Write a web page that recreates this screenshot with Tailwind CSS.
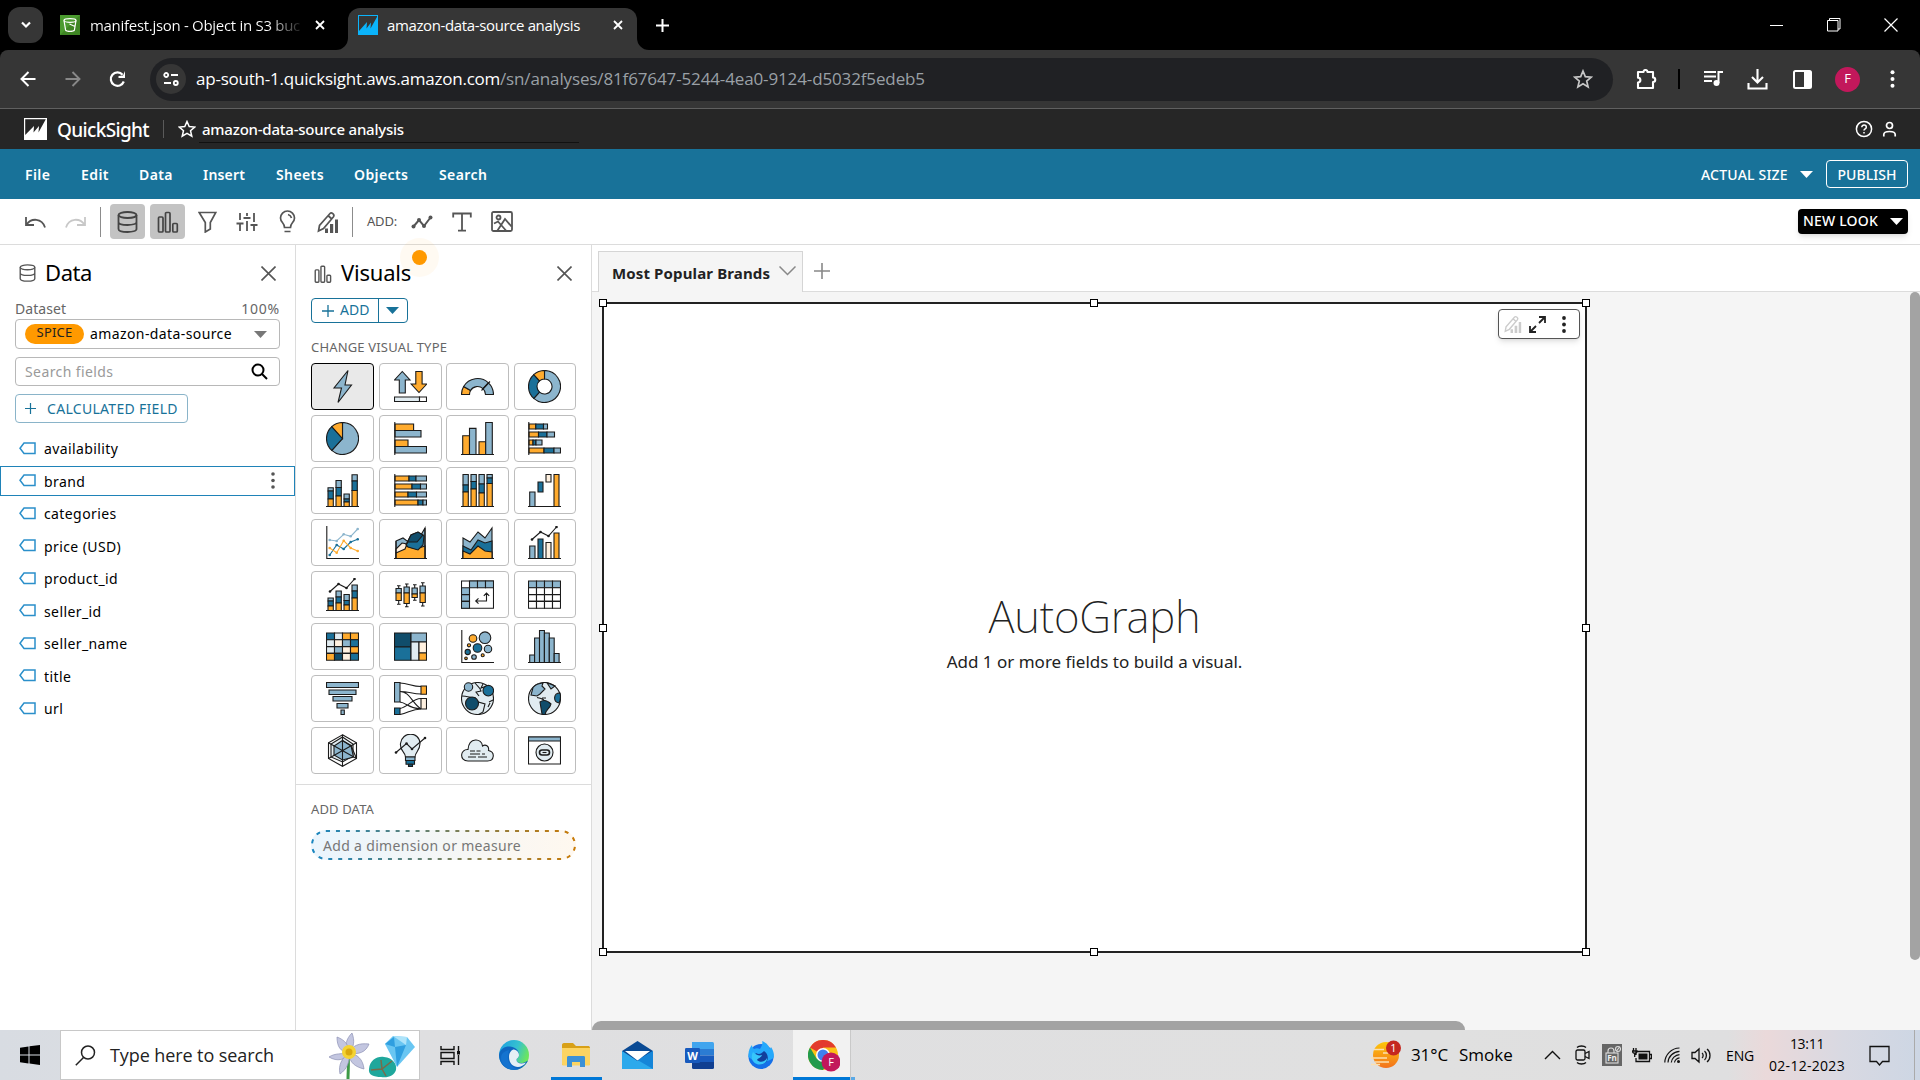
<!DOCTYPE html>
<html lang="en">
<head>
<meta charset="utf-8">
<title>amazon-data-source analysis</title>
<script src="https://cdn.jsdelivr.net/npm/@tailwindcss/browser@4"></script>
</head>
<body class="w-[1920px] h-[1080px] overflow-hidden flex flex-col bg-white text-black font-['Noto_Sans',sans-serif] whitespace-nowrap">

<!-- Browser tab strip -->
<div class="h-[50px] shrink-0 bg-black flex items-center text-white font-['Open_Sans',sans-serif] text-[15px]">
  <div class="ml-2 w-[35px] h-9 rounded-xl bg-[#363636] flex items-center justify-center">
    <svg width="12" height="8" viewBox="0 0 12 8" fill="none" stroke="#fff" stroke-width="2.2"><path d="M2 1.5l4 4 4-4"/></svg>
  </div>
  <svg class="ml-[17px]" width="20" height="20" viewBox="0 0 20 20"><rect width="20" height="20" fill="#4b9b2f"/><path d="M0 20L20 0v20z" fill="#3f8624"/><g fill="none" stroke="#fff" stroke-width="1.2"><ellipse cx="10" cy="5.5" rx="6" ry="1.8"/><path d="M4 5.5l1.6 9.6c1 1.6 7.8 1.6 8.8 0L16 5.5M9.500 9l5.500 2.500"/></g></svg>
  <div class="ml-[10px] w-[210px]"><span class="tracking-[-0.3px] bg-gradient-to-r from-white from-85% to-[#222] bg-clip-text text-transparent">manifest.json - Object in S3 buc</span></div>
  <svg class="ml-[15px]" width="10" height="10" viewBox="0 0 10 10" stroke="#fff" stroke-width="1.8"><path d="M1 1l8 8M9 1l-8 8"/></svg>
  <div class="relative ml-[23px] w-[289px] h-[42px] mt-2 rounded-t-xl bg-[#363636] flex items-center pb-2">
    <svg class="absolute left-[-12px] bottom-0" width="12" height="12" viewBox="0 0 12 12"><path d="M12 0v12H0A12 12 0 0 0 12 0z" fill="#363636"/></svg>
    <svg class="absolute right-[-12px] bottom-0" width="12" height="12" viewBox="0 0 12 12"><path d="M0 0v12h12A12 12 0 0 1 0 0z" fill="#363636"/></svg>
    <svg class="ml-[10px]" width="20" height="20" viewBox="0 0 20 20"><rect width="20" height="20" fill="#0bb4fb"/><path d="M1 1h18v1L12.500 13.500l.500-6-4.500 6L9 7 1 16z" fill="#363636"/></svg>
    <span class="ml-[9px] w-[193px] tracking-[-0.37px]">amazon-data-source analysis</span>
    <svg class="ml-[33px]" width="10" height="10" viewBox="0 0 10 10" stroke="#fff" stroke-width="1.8"><path d="M1 1l8 8M9 1l-8 8"/></svg>
  </div>
  <svg class="ml-[19px]" width="13" height="13" viewBox="0 0 13 13" stroke="#fff" stroke-width="2"><path d="M6.500 0v13M0 6.500h13"/></svg>
  <div class="ml-auto flex items-center gap-[43px] mr-[22px]">
    <svg width="14" height="14" viewBox="0 0 14 14" stroke="#fff"><path d="M0 7.500h13"/></svg>
    <svg width="14" height="14" viewBox="0 0 14 14" fill="none" stroke="#fff"><path d="M.5 2.500h10.500v10.500H.5zM2.500 2.500V.5h10.500V11H11"/></svg>
    <svg width="14" height="14" viewBox="0 0 14 14" stroke="#fff" stroke-width="1.2"><path d="M.5.500l13 13M13.500.500l-13 13"/></svg>
  </div>
</div>

<!-- Browser toolbar -->
<div class="h-[59px] shrink-0 bg-black"><div class="h-full rounded-t-lg bg-[#363636] border-b border-[#606060] flex items-center font-['Open_Sans',sans-serif] text-[17px]">
  <svg class="ml-[20px]" width="16" height="16" viewBox="0 0 16 16" fill="none" stroke="#fff" stroke-width="2"><path d="M15.500 8H2M8.500 1L1.500 8l7 7"/></svg>
  <svg class="ml-[29px]" width="16" height="16" viewBox="0 0 16 16" fill="none" stroke="#888" stroke-width="1.9"><path d="M.5 8H14M7.500 1l7 7-7 7"/></svg>
  <svg class="ml-[28px]" width="17" height="17" viewBox="0 0 17 17" fill="none" stroke="#fff" stroke-width="2.2"><path d="M14.800 10.500a6.700 6.700 0 1 1-1.200-6.800"/><path d="M16 0v7H9.500V5L14 4.500z" fill="#fff" stroke="none"/></svg>
  <div class="ml-[24px] w-[1463px] h-[43px] rounded-full bg-[#202124] flex items-center">
    <div class="ml-[6px] size-[30px] rounded-full bg-[#363636] flex items-center justify-center">
      <svg width="16" height="16" viewBox="0 0 16 16" fill="none" stroke="#fff" stroke-width="1.8"><circle cx="3.200" cy="4" r="2"/><path d="M8 4h7M1 12h7"/><circle cx="12.800" cy="12" r="2"/></svg>
    </div>
    <span class="ml-[10px] w-[304px] text-white tracking-[-0.22px]">ap-south-1.quicksight.aws.amazon.com</span><span class="w-[425px] text-[#9aa0a6] tracking-[-0.13px]">/sn/analyses/81f67647-5244-4ea0-9124-d5032f5edeb5</span>
    <svg class="ml-auto mr-[20px]" width="20" height="20" viewBox="0 0 20 20" fill="none" stroke="#c7c7c7" stroke-width="1.7"><path d="M10 2l2.300 5.600 6 .5-4.600 3.900 1.400 5.900L10 14.700l-5.100 3.200L6.300 12 1.700 8.100l6-.5z"/></svg>
  </div>
  <svg class="ml-[23px]" width="21" height="21" viewBox="0 0 21 21" fill="none" stroke="#fff" stroke-width="2.1"><path d="M2 3h5.500a2 2 0 0 1 4 0H17v5.500a2 2 0 0 1 0 4.500v6H2v-5.500a2.300 2.300 0 0 0 0-4.800z" stroke-linejoin="round"/></svg>
  <div class="ml-[21px] w-[2px] h-5 bg-black"></div>
  <svg class="ml-[23px]" width="21" height="20" viewBox="0 0 21 20" fill="none" stroke="#fff" stroke-width="2"><path d="M1 3h12M1 7.500h12M1 12h8M15.500 14V3H20"/><circle cx="13.500" cy="14" r="3" fill="#fff" stroke="none"/></svg>
  <svg class="ml-[23px]" width="21" height="21" viewBox="0 0 21 21" fill="none" stroke="#fff" stroke-width="2.1"><path d="M10.500 0v13M5 8l5.500 5.500L16 8M1.500 14v5.500h18V14"/></svg>
  <svg class="ml-[25px]" width="19" height="19" viewBox="0 0 19 19"><rect x="1" y="1" width="17" height="17" rx="1.5" fill="none" stroke="#fff" stroke-width="2"/><path d="M11 1h7v17h-7z" fill="#fff"/></svg>
  <div class="ml-[23px] size-[25px] rounded-full bg-[#c2185b] text-white text-[13px] flex items-center justify-center">F</div>
  <svg class="ml-[30px]" width="5" height="18" viewBox="0 0 5 18" fill="#fff"><circle cx="2.500" cy="2.200" r="2"/><circle cx="2.500" cy="9" r="2"/><circle cx="2.500" cy="15.800" r="2"/></svg>
</div></div>

<!-- QuickSight header -->
<div class="h-10 shrink-0 bg-[#262626] flex items-center text-white">
  <svg class="ml-6" width="23" height="22" viewBox="0 0 23 22"><rect width="23" height="22" fill="#fff"/><path d="M1.200 1.200h20.600L14.500 14.500l.5-6.500-5.500 6.500L10 8 1.200 17z" fill="#262626"/></svg>
  <span class="ml-[10px] w-[92px] text-[19px] font-medium tracking-[-0.65px] pt-0.5">QuickSight</span>
  <div class="ml-[14px] w-px h-[18px] bg-[#5a5a5a]"></div>
  <svg class="ml-[14px]" width="18" height="18" viewBox="0 0 18 18" fill="none" stroke="#fff" stroke-width="1.5"><path d="M9 1.500l2.200 5.100 5.500.5-4.200 3.600 1.300 5.500L9 13.300l-4.800 2.900 1.300-5.500L1.300 7.100l5.500-.5z"/></svg>
  <div class="ml-[3px] w-[380px] h-[28px] border-b border-[#111] pl-[3px] flex items-center pt-0.5"><span class="text-[15px] font-medium tracking-[-0.22px]">amazon-data-source analysis</span></div>
  <svg class="ml-auto" width="18" height="18" viewBox="0 0 18 18" fill="none" stroke="#fff" stroke-width="1.5"><circle cx="9" cy="9" r="7.600"/><path d="M6.800 7.300c0-3 4.500-2.800 4.500-.1C11.300 8.800 9 8.800 9 10.500M9 12v1.500"/></svg>
  <svg class="ml-[9px] mr-[23px]" width="15" height="16" viewBox="0 0 15 16" fill="none" stroke="#fff" stroke-width="1.7"><circle cx="7.500" cy="4.500" r="3"/><path d="M1.800 15.500v-2c0-4 11.400-4 11.400 0v2"/></svg>
</div>

<!-- Menu bar -->
<div class="h-[50px] shrink-0 bg-[#187299] flex items-center text-white text-[14px] font-semibold tracking-[0.4px] pl-[25px]">
  <span class="w-[56px]">File</span><span class="w-[58px]">Edit</span><span class="w-[64px]">Data</span><span class="w-[73px] tracking-[0.2px]">Insert</span><span class="w-[78px]">Sheets</span><span class="w-[85px]">Objects</span><span class="w-[48px]">Search</span>
  <span class="ml-auto w-[87px] font-medium tracking-[0.2px]">ACTUAL SIZE</span>
  <svg class="ml-3" width="13" height="7" viewBox="0 0 13 7" fill="#fff"><path d="M0 0h13L6.500 7z"/></svg>
  <div class="ml-[13px] mr-3 w-[82px] h-7 rounded border border-white flex items-center justify-center font-medium tracking-[0.05px]">PUBLISH</div>
</div>

<!-- Tool bar -->
<div class="h-[46px] shrink-0 bg-white border-b border-[#dcdcdc] flex items-center">
  <svg class="ml-6" width="23" height="14" viewBox="0 0 23 14" fill="none" stroke="#555" stroke-width="1.8"><path d="M2 2v8h8M2.500 9.500C7 3 18 2.500 21 12.500"/></svg>
  <svg class="ml-[17px]" width="23" height="14" viewBox="0 0 23 14" fill="none" stroke="#c8c8c8" stroke-width="1.8"><path d="M21 2v8h-8M20.500 9.500C16 3 5 2.500 2 12.500"/></svg>
  <div class="ml-[13px] w-px h-[30px] bg-[#8c8c8c]"></div>
  <div class="ml-[9px] w-[35px] h-[35px] rounded bg-[#c3c3c3] flex items-center justify-center">
    <svg width="21" height="22" viewBox="0 0 21 22" fill="none" stroke="#444" stroke-width="1.8"><ellipse cx="10.500" cy="4" rx="9" ry="3"/><path d="M1.500 4v14c0 4 18 4 18 0V4M1.500 11c0 4 18 4 18 0"/></svg>
  </div>
  <div class="ml-[5px] w-[35px] h-[35px] rounded bg-[#c3c3c3] flex items-center justify-center">
    <svg width="22" height="22" viewBox="0 0 22 22" fill="none" stroke="#444" stroke-width="1.7"><rect x="1.500" y="6" width="4.500" height="15" rx="1"/><rect x="8.500" y="1.500" width="4.500" height="19.500" rx="1"/><rect x="15.800" y="12.500" width="4.500" height="8.500" rx="1"/></svg>
  </div>
  <svg class="ml-[13px]" width="19" height="22" viewBox="0 0 19 22" fill="none" stroke="#555" stroke-width="1.7"><path d="M1.200 1.500h16.600l-5.500 10v6.500l-5 3V11.500z"/></svg>
  <svg class="ml-[19px]" width="22" height="20" viewBox="0 0 22 20" fill="none" stroke="#555" stroke-width="1.8"><path d="M4 1v7M4 12v7M11 1v3M11 9v10M18 1v9M18 14v5M.5 11.500h7M7.500 6h7M14.500 13h7"/></svg>
  <svg class="ml-[21px]" width="17" height="23" viewBox="0 0 17 23" fill="none" stroke="#555" stroke-width="1.7"><path d="M5.500 17.500c0-5-4-5-4-9.500a7 7 0 0 1 14 0c0 4.500-4 4.500-4 9.500zM5.500 21.500h6M9 4.500c2 .5 3 1.500 3.500 3.500"/></svg>
  <svg class="ml-[21px]" width="22" height="22" viewBox="0 0 22 22" fill="none" stroke="#555" stroke-width="1.7"><path d="M1.500 20l1-5.500L13 2.500c1.500-1.500 5 1 3.500 3.200L6.500 17.500zM11 4.500l3.800 3.500"/><path d="M8 17.500h3V22H8zM13 13h3.200v9H13zM18 8.500h3V22h-3z" fill="#555" stroke="none"/></svg>
  <div class="ml-[13px] w-px h-[30px] bg-[#8c8c8c]"></div>
  <span class="ml-[14px] w-[31px] text-[13px] text-[#555] tracking-[-0.2px]">ADD:</span>
  <svg class="ml-[13px]" width="22" height="14" viewBox="0 0 22 14" fill="none" stroke="#555" stroke-width="2"><path d="M2.500 11.500L8 5l5 6 6.500-8.500"/><g fill="#555" stroke="none"><circle cx="2.500" cy="11.500" r="2"/><circle cx="8" cy="5" r="2"/><circle cx="13" cy="11" r="2"/><circle cx="19.500" cy="2.500" r="2"/></g></svg>
  <svg class="ml-[19px]" width="20" height="20" viewBox="0 0 20 20" fill="none" stroke="#555" stroke-width="1.8"><path d="M1.200 5.500V1.500h17.600v4M10 1.500v17M6 18.600h8"/></svg>
  <svg class="ml-[19px]" width="22" height="21" viewBox="0 0 22 21" fill="none" stroke="#555" stroke-width="1.8"><rect x="1" y="1" width="20" height="19" rx="1.5"/><circle cx="7.500" cy="6.500" r="2"/><path d="M3 12.500l4-2 8 9M6.500 19.500L14 8l6.500 7.500"/></svg>
  <div class="ml-auto mr-3 w-[110px] h-[25px] rounded bg-black shadow-md flex items-center text-white text-[14px] font-medium pl-[5px]"><span class="w-[76px] -mt-0.5 tracking-[0.19px]">NEW LOOK</span><svg class="ml-[11px]" width="13" height="7" viewBox="0 0 13 7" fill="#fff"><path d="M0 0h13L6.500 7z"/></svg></div>
</div>

<div class="h-[785px] shrink-0 flex">
  <!-- Data panel -->
  <div class="w-[296px] shrink-0 border-r border-[#dcdcdc] flex flex-col text-[14px] tracking-[0.4px]">
    <div class="h-[54px] pl-[19px] pr-[19px] flex items-center">
      <svg class="mt-0.5" width="17" height="18" viewBox="0 0 21 22" fill="none" stroke="#555" stroke-width="1.7"><ellipse cx="10.500" cy="4" rx="9" ry="3"/><path d="M1.500 4v14c0 4 18 4 18 0V4M1.500 11c0 4 18 4 18 0"/></svg>
      <span class="ml-[9px] text-[22px] tracking-[-0.42px]">Data</span>
      <svg class="mt-0.5 ml-auto" width="15" height="15" viewBox="0 0 15 15" stroke="#555" stroke-width="1.6"><path d="M.5.500l14 14M14.500.500l-14 14"/></svg>
    </div>
    <div class="h-[20px] pb-0.5 pl-[15px] pr-[15px] flex items-center justify-between text-[#666]"><span class="tracking-[0.05px]">Dataset</span><span class="tracking-[0.8px]">100%</span></div>
    <div class="ml-[15px] w-[265px] h-[30px] rounded border border-[#b8b8b8] flex items-center pl-[9px]">
      <div class="w-[59px] h-5 rounded-full bg-[#ff9900] text-[13px] leading-[17px] text-[#222] text-center tracking-[0.2px]">SPICE</div>
      <span class="ml-[6px] w-[142px] -mt-0.5">amazon-data-source</span>
      <svg class="ml-[22px]" width="13" height="7" viewBox="0 0 13 7" fill="#777"><path d="M0 0h13L6.500 7z"/></svg>
    </div>
    <div class="mt-2 ml-[15px] w-[265px] h-[29px] rounded border border-[#b8b8b8] flex items-center pl-[9px] pr-[11px] text-[#9a9a9a]"><span>Search fields</span><svg class="ml-auto" width="17" height="17" viewBox="0 0 17 17" fill="none" stroke="#000" stroke-width="2"><circle cx="7" cy="7" r="5.500"/><path d="M11 11l5 5"/></svg></div>
    <div class="mt-2 ml-[15px] w-[173px] h-[29px] rounded border border-[#8ab4c9] flex items-center pl-[9px] text-[#187299] text-[14px]"><svg width="11" height="11" viewBox="0 0 11 11" stroke="#187299" stroke-width="1.2"><path d="M5.500 0v11M0 5.500h11"/></svg><span class="ml-[11px] tracking-[0.3px]">CALCULATED FIELD</span></div>
    <div id="fields" class="mt-[9px] flex flex-col"></div>
  </div>

  <!-- Visuals panel -->
  <div class="w-[296px] shrink-0 border-r border-[#dcdcdc] flex flex-col text-[13px]">
    <div class="h-[53px] shrink-0 pl-[18px] pr-[19px] pt-0.5 flex items-center">
      <svg class="mt-0.5" width="18" height="18" viewBox="0 0 22 22" fill="none" stroke="#555" stroke-width="1.7"><rect x="1.500" y="6" width="4.500" height="15" rx="1"/><rect x="8.500" y="1.500" width="4.500" height="19.500" rx="1"/><rect x="15.800" y="12.500" width="4.500" height="8.500" rx="1"/></svg>
      <div class="relative ml-[9px]"><div class="absolute left-[59px] top-[-18px] size-[39px] rounded-full bg-[#ff9900]/5 flex items-center justify-center"><div class="size-[15px] rounded-full bg-[#ff9900]"></div></div><span class="relative text-[22px] tracking-[-0.22px]">Visuals</span></div>
      <svg class="ml-auto mt-0.5" width="15" height="15" viewBox="0 0 15 15" stroke="#555" stroke-width="1.6"><path d="M.5.500l14 14M14.500.500l-14 14"/></svg>
    </div>
    <div class="ml-[15px] w-[97px] h-[25px] shrink-0 rounded border border-[#187299] flex items-center text-[#187299] text-[14px]">
      <svg class="ml-[10px]" width="12" height="12" viewBox="0 0 12 12" stroke="#187299" stroke-width="1.3"><path d="M6 0v12M0 6h12"/></svg>
      <span class="ml-[6px] w-[38px] pb-0.5">ADD</span>
      <div class="w-px h-full bg-[#187299]"></div><svg class="ml-[7px]" width="13" height="7" viewBox="0 0 13 7" fill="#187299"><path d="M0 0h13L6.500 7z"/></svg>
    </div>
    <div class="mt-[15px] ml-[15px] h-[18px] leading-[18px] text-[#666] tracking-[0.17px]">CHANGE VISUAL TYPE</div>
    <div id="visuals" class="mt-[7px] ml-[15px] w-[265px] grid grid-cols-[63px_63px_63px_62px] gap-x-[4.6px] gap-y-[5px]"></div>
    <div class="mt-[10px] border-t border-[#dcdcdc]"></div>
    <div class="mt-[15px] ml-[15px] h-[18px] leading-[18px] text-[#666] tracking-[0.14px]">ADD DATA</div>
    <div class="relative mt-[12px] ml-[15px] w-[265px] h-[30px] rounded-full bg-gradient-to-r from-[#eaf5fd] to-[#fff8ef] flex items-center pl-3 text-[14px] text-[#777]">
      <svg class="absolute inset-0" width="265" height="30" fill="none"><defs><linearGradient id="edge"><stop stop-color="#1a86c0"/><stop offset="1" stop-color="#c97a06"/></linearGradient></defs><rect x="1" y="1" width="263" height="28" rx="14" stroke="url(#edge)" stroke-width="2" stroke-dasharray="4 5.95"/></svg>
      <span class="tracking-[0.32px]">Add a dimension or measure</span>
    </div>
  </div>

  <!-- Sheet area -->
  <div class="relative flex-1 bg-[#f5f5f5] flex flex-col">
    <div class="h-[47px] shrink-0 bg-white border-b border-[#dcdcdc] flex">
      <div class="ml-[6px] mt-[6px] w-[205px] h-[41px] bg-[#f5f5f5] border border-b-0 border-[#d5d5d5] flex items-center pl-[13px] pt-0.5 text-[15px] font-bold text-[#222]"><span class="w-[158px] tracking-[0.13px]">Most Popular Brands</span><svg class="ml-[9px] -mt-1" width="17" height="10" viewBox="0 0 17 10" fill="none" stroke="#888" stroke-width="1.5"><path d="M.5.500l8 8 8-8"/></svg></div>
      <svg class="ml-[11px] mt-[18px]" width="16" height="16" viewBox="0 0 16 16" stroke="#888" stroke-width="1.6"><path d="M8 0v16M0 8h16"/></svg>
    </div>
    <div class="relative mt-[10px] ml-[10px] w-[985px] h-[651px] bg-white border-2 border-[#222] flex flex-col items-center text-[#222]">
      <i class="absolute left-[-5px] top-[-5px] size-2 bg-white border border-black"></i><i class="absolute left-[486px] top-[-5px] size-2 bg-white border border-black"></i><i class="absolute right-[-5px] top-[-5px] size-2 bg-white border border-black"></i>
      <i class="absolute left-[-5px] top-[320px] size-2 bg-white border border-black"></i><i class="absolute right-[-5px] top-[320px] size-2 bg-white border border-black"></i>
      <i class="absolute left-[-5px] bottom-[-5px] size-2 bg-white border border-black"></i><i class="absolute left-[486px] bottom-[-5px] size-2 bg-white border border-black"></i><i class="absolute right-[-5px] bottom-[-5px] size-2 bg-white border border-black"></i>
      <div class="absolute right-[5px] top-[5px] w-[82px] h-[30px] rounded border border-[#555] bg-white shadow-md flex items-center pl-[5px]">
        <svg width="18" height="18" viewBox="0 0 22 22" fill="none" stroke="#ccc" stroke-width="1.7"><path d="M1.500 20l1-5.500L13 2.500c1.500-1.500 5 1 3.500 3.200L6.500 17.500zM11 4.500l3.800 3.500"/><path d="M8 17.500h3V22H8zM13 13h3.200v9H13zM18 8.500h3V22h-3z" fill="#ccc" stroke="none"/></svg>
        <svg class="ml-[7px]" width="17" height="17" viewBox="0 0 17 17" fill="none" stroke="#222" stroke-width="1.8"><path d="M10 1h6v6M16 1l-6 6M1 10v6h6M1 16l6-6"/></svg>
        <svg class="ml-[16px]" width="4" height="17" viewBox="0 0 4 17" fill="#222"><circle cx="2" cy="2" r="1.900"/><circle cx="2" cy="8.500" r="1.900"/><circle cx="2" cy="15" r="1.900"/></svg>
      </div>
      <div class="mt-[281px] h-[62px] leading-[62px] text-[44px] font-extralight tracking-[-0.2px]">AutoGraph</div>
      <div class="mt-[3px] h-6 leading-6 text-[17px]">Add 1 or more fields to build a visual.</div>
    </div>
    <div class="absolute right-0 top-[47px] w-[10px] h-[668px] rounded-full bg-[#a3a3a3]"></div>
    <div class="absolute left-0 bottom-0 w-[873px] h-[9px] rounded-t-full bg-[#a3a3a3]"></div>
  </div>
</div>

<!-- Windows taskbar -->
<div class="h-[50px] shrink-0 flex items-center bg-[linear-gradient(90deg,#d8dce2_0,#dfdfe1_20%,#e0e0e0_75%,#dfdfe0_90%,#ead9da_92%,#d8d9e2_96%,#cdd6e4_100%)] font-['Open_Sans',sans-serif]">
  <svg class="ml-5" width="20" height="20" viewBox="0 0 20 20"><path d="M0 2.800l8.500-1.300v8H0zM9.500 1.300L20 0v9.500H9.500zM0 10.500h8.500v8L0 17.300zM9.500 10.500H20V20L9.500 18.600z"/></svg>
  <div class="ml-5 w-[360px] h-[50px] bg-white border border-[#c8c8c8] flex items-center text-[#222]">
    <svg class="ml-[14px]" width="21" height="21" viewBox="0 0 21 21" fill="none" stroke="#222" stroke-width="1.5"><circle cx="13" cy="7.500" r="6.500"/><path d="M8.500 12.500L.8 20.300"/></svg>
    <span class="ml-[14px] w-[164px] text-[18px] tracking-[-0.09px]">Type here to search</span>
    <svg class="ml-[54px]" width="88" height="48" viewBox="0 0 88 48">
      <path d="M20 25c1 8 0 15 0 23" stroke="#3d9a46" stroke-width="3" fill="none"/>
      <g fill="#c3c6e0" stroke="#8d90b5" stroke-width=".7"><path d="M21 22c-5-7-3-14 3-20 3 8 2 14-3 20z"/><path d="M21 22C12 21 9 15 9 6c8 3 12 8 12 16z"/><path d="M21 22c4-8 10-10 20-9-3 8-10 11-20 9z"/><path d="M21 22c-7 1-14 0-20 4 8 5 17 3 20-4z"/><path d="M21 22c-7 5-11 12-9 21 7-5 10-12 9-21z"/><path d="M21 22c8 1 14 6 15 16-8-2-15-6-15-16z"/></g><circle cx="21" cy="21" r="7" fill="#f4d333"/><circle cx="21" cy="21" r="3.500" fill="#d9a80f"/>
      <path d="M57 13l8-8 14 1 8 10-18 20z" fill="#69c6f2"/><path d="M57 13l10 3-1-10zM67 16l2 20 9-22z" fill="#2f9fe0"/><path d="M65 5l13 9 1-8z" fill="#aee4fa"/>
      <path d="M41 38c1-9 8-13 15-12 9 1 13 7 12 13-2 6-8 8-15 7-7 0-13-2-12-8z" fill="#1fa79c"/><path d="M43 39l11-1 10-8M54 38l4 7M54 38l-1-9" stroke="#7a6a4a" stroke-width="1.5" fill="none"/>
    </svg>
  </div>
  <svg class="ml-5" width="21" height="20" viewBox="0 0 21 20" fill="none" stroke="#111" stroke-width="1.4"><path d="M1 1v3.500h13V1M1 7.500h13v6H1zM1 20v-3.500h13V20M18.500 1v5M18.500 10v10"/><path d="M17 6h3v3.500h-3z" fill="#111" stroke="none"/></svg>
  <svg class="ml-[38px]" width="30" height="30" viewBox="0 0 30 30"><defs><linearGradient id="eg" x1="0" y1="0" x2="1" y2=".4"><stop stop-color="#1b9de2"/><stop offset=".6" stop-color="#35c1d0"/><stop offset="1" stop-color="#6be55f"/></linearGradient></defs><circle cx="15" cy="15" r="15" fill="url(#eg)"/><path d="M0 15C1 8 7 6 11 6.500c7 1 9 5 9 8.500 0 3-2.500 3-2.500 5 0 4 7 4 11.500.5C26 27 20 30 15 30 6 30 0 23 0 15z" fill="#0f66c0"/><path d="M10 17c0-5 3-7.500 5-7.500 3 .5 5 3 5 5.500 0 3-2.500 3-2.500 5 0 3.500 5 4.500 9.500 2.500C22 30 10 28 10 17z" fill="#e4eff5"/><path d="M9 16c-1 7 5 13 11 13-9 3-18-3-18-11 0-5 4-7 8-8z" fill="#1573cf"/></svg>
  <div class="ml-[22px] w-[51px] h-full border-b-[3px] border-[#0078d7] flex items-center justify-center"><svg class="mt-[3px] -ml-0.5" width="28" height="24" viewBox="0 0 28 24"><path d="M0 2c0-1 .5-2 2-2h9l3 3h12c1 0 2 .5 2 2v17H0z" fill="#d8a017"/><path d="M0 5h28v16c0 1-.5 1.500-1.500 1.500h-25C.5 22.500 0 22 0 21z" fill="#fcd462"/><path d="M5 24V14.500c0-1 .7-1.500 1.500-1.500h15c1 0 1.500.5 1.500 1.500V24h-5v-5h-8v5z" fill="#3c91d6"/></svg></div>
  <svg class="ml-[20px]" width="31" height="28" viewBox="0 0 31 28"><path d="M0 10L15.500 0 31 10v17H0z" fill="#0a4a94"/><path d="M0 10l15.500 10L31 10v18H0z" fill="#2ca9ec"/><path d="M31 10v18L15.500 19z" fill="#1585d8"/><path d="M3 10h25L15.500 19.500z" fill="#fff"/></svg>
  <svg class="ml-[32px]" width="29" height="27" viewBox="0 0 29 27"><path d="M7 0h20.500q1.500 0 1.500 1.500V7H7z" fill="#41a5ee"/><path d="M7 7h22v6.500H7z" fill="#2b7cd3"/><path d="M7 13.500h22V20H7z" fill="#185abd"/><path d="M7 20h22v5.500q0 1.500-1.500 1.500H8.500Q7 27 7 25.500z" fill="#103f91"/><rect y="6" width="15" height="15" rx="1.3" fill="#185abd"/><text x="7.500" y="17.500" fill="#fff" font-size="11" font-weight="700" text-anchor="middle">W</text></svg>
  <svg class="ml-[33px]" width="28" height="28" viewBox="0 0 28 28"><circle cx="14" cy="15.500" r="12.500" fill="#1570e8"/><path d="M1.500 16C1 10 3 6 5 4c0 2 1 3 2 4 2-1 4-1 6 0 2-3 3-6 2-8 5 2 7 5 8 8l1-2c2 3 3.500 6 2.500 11-9 6-17 6-25-1z" fill="#25a9fb"/><path d="M9 12c3 2 5 1 8-2 3 2 5 6 3 10-4 5-11 4-13-1 0-3 0-5 2-7z" fill="#123f9c"/><path d="M6 11c3 3 6 4 9 3-1 3-4 3-5 5 3 3 8 2 10-2 1 7-12 10-15 1-.5-3 0-5 1-7z" fill="#37c6fb"/></svg>
  <div class="ml-[18px] w-[57px] h-full bg-[#f2f2f2] border-b-[3px] border-[#0078d7] flex items-center justify-center"><svg class="mt-1 ml-1" width="32" height="32" viewBox="0 0 32 32"><circle cx="15" cy="15" r="15" fill="#fbc116"/><path d="M15 15L2 7.500A15 15 0 0 1 28 7.500H15z" fill="#e33b2e"/><path d="M2 7.500A15 15 0 0 0 15 30l6.500-11.500h-13z" fill="#229b4c"/><circle cx="15" cy="15" r="7" fill="#fff"/><circle cx="15" cy="15" r="5.500" fill="#3f81ee"/><circle cx="23" cy="22" r="9.500" fill="#c2185b"/><text x="23" y="26" fill="#fff" font-size="11" text-anchor="middle">F</text></svg></div>
  <div class="w-px h-full bg-[#c9c9c9]"></div><div class="w-1 h-full border-b-[3px] border-[#5aa9e6]"></div>

  <div class="ml-auto flex items-center h-full text-black">
    <svg width="30" height="30" viewBox="0 0 30 30"><defs><linearGradient id="sun" x2="0" y2="1"><stop stop-color="#fdc70a"/><stop offset="1" stop-color="#f3711c"/></linearGradient></defs><circle cx="15" cy="15" r="13" fill="url(#sun)"/><path d="M3 9.500h10M12 13h13M0 18h16M4 22h14M0 24.500h9" stroke="#fbe0b0" stroke-width="1.7"/><circle cx="22.500" cy="8" r="7.500" fill="#c4271f"/><text x="22.500" y="12" fill="#fff" font-size="11" text-anchor="middle">1</text></svg>
    <span class="ml-[10px] w-[37px] text-[17px] tracking-[-0.1px]">31°C</span><span class="ml-[11px] w-[54px] text-[17px]">Smoke</span>
    <svg class="ml-[31px]" width="17" height="10" viewBox="0 0 17 10" fill="none" stroke="#111" stroke-width="1.4"><path d="M1 9l7.500-7.500L16 9"/></svg>
    <svg class="ml-[14px]" width="16" height="20" viewBox="0 0 16 20" fill="none" stroke="#111" stroke-width="1.3"><rect x="1" y="5" width="9" height="10" rx="1.5"/><path d="M10 8.500l4-2v7l-4-2M2 2.500C4 .5 9 .5 11 2.500M2 17.500c2 2 7 2 9 0"/></svg>
    <div class="ml-[11px] w-5 h-[22px] bg-[#666] flex items-center justify-center"><svg width="18" height="20" viewBox="0 0 18 20" fill="none" stroke="#ddd" stroke-width="1.1"><rect x="3" y="8" width="12" height="10"/><path d="M5 8V6c0-4 6-4 6 0v2"/><circle cx="15" cy="4" r="2.500"/><path d="M13.500 6l3-4"/><text x="9" y="16" font-size="8" font-weight="700" fill="#eee" stroke="none" text-anchor="middle">Fn</text></svg></div>
    <svg class="ml-[10px]" width="20" height="15" viewBox="0 0 20 15" fill="none" stroke="#111" stroke-width="1.3"><path d="M4 7V3.500h13.500v10H4V10M18 6.500h1.500v4H18M1.500 0v2.500M4 0v2.500M.5 3h4.500c0 3-4.500 3-4.500 0zM2.700 5v4"/><path d="M6.500 5.500h9v6h-9z" fill="#111" stroke="none"/></svg>
    <svg class="ml-[12px]" width="17" height="17" viewBox="0 0 17 17" fill="none" stroke="#111" stroke-width="1.2"><path d="M.8 15.500C1 7.500 7.500 1.200 15.500 1M4 15.500C4.200 9.500 9.500 4.500 15.500 4.300M7.300 15.500c.2-4 4-7.700 8.200-7.900M10.500 15.500c.2-2.200 2.500-4.500 5-4.700"/><circle cx="14.500" cy="14.500" r="1.500" fill="#111" stroke="none"/></svg>
    <svg class="ml-[10px]" width="21" height="17" viewBox="0 0 21 17" fill="none" stroke="#111" stroke-width="1.3"><path d="M1 5.500h3L8 2v13l-4-3.500H1zM11 6c1.500 1 1.500 4 0 5M13.500 4c2.500 2 2.500 7 0 9M16 2c4 3 4 10 0 13"/></svg>
    <span class="ml-[14px] w-[29px] text-[14px] tracking-[-0.1px]">ENG</span>
    <div class="ml-[14px] w-[76px] flex flex-col items-center text-[14px] leading-[22px]"><span class="tracking-[-0.3px]">13:11</span><span class="tracking-[0.29px]">02-12-2023</span></div>
    <svg class="ml-[24px]" width="21" height="21" viewBox="0 0 21 21" fill="none" stroke="#111" stroke-width="1.3"><path d="M1 1.500h19v15h-6.500L10.500 20l-3-3.500H1z"/></svg>
    <div class="ml-[24px] mr-[5px] w-px h-[50px] bg-[#aaa]"></div>
  </div>
</div>

<script>
const fields = ['availability', 'brand', 'categories', 'price (USD)', 'product_id', 'seller_id', 'seller_name', 'title', 'url'];
document.getElementById('fields').innerHTML = fields.map(f => `
  <div class="h-[32.5px] flex items-center"><div class="w-[295px] h-[30px] flex items-center pl-[18px] pr-[19px] border ${f === 'brand' ? 'border-[#1f83b8]' : 'border-transparent'}">
    <svg width="17" height="13" viewBox="0 0 17 13" fill="none" stroke="#2a8fca" stroke-width="1.5"><path d="M5 1h11v10.500H5L1 6.200z"/></svg>
    <span class="ml-[8px] pt-px">${f}</span>
    ${f === 'brand' ? '<svg class="ml-auto" width="4" height="17" viewBox="0 0 4 17" fill="#555"><circle cx="2" cy="2" r="1.8"/><circle cx="2" cy="8.5" r="1.8"/><circle cx="2" cy="15" r="1.8"/></svg>' : ''}
  </div></div>`).join('');

// Chart palette and small drawing helpers for the visual type icons (33 x 33 units)
const B = '#8cb5cd', D = '#1a7099', O = '#ffab2e', N = '#104d6b', L = '#e1ecf1', C = '#fff1e0', W = '#fff';
const rect = (x, y, x2, y2, c) => `<path d="M${x} ${y}H${x2}V${y2}H${x}z" fill="${c}"/>`;
const poly = (p, c) => `<polygon points="${p}" fill="${c}"/>`;
const line = d => `<path d="${d}" fill="none"/>`;
const circ = (x, y, r, c) => `<circle cx="${x}" cy="${y}" r="${r}" fill="${c}"/>`;
const cols = list => list.map(([x, ...s]) => s.slice(0, -1).map((v, i) => rect(x, v[0], x + 5.3, s[i + 1][0], v[1])).join('')).join('');
const rows = list => list.map(([y, ...s]) => s.map((v, i) => rect(i ? s[i - 1][0] : 1, y, v[0], y + 5, v[1])).join('')).join('');
const base = line('M0 32.500H33'), side = line('M.8 0V33');
const sector = (cx, cy, R, r, a, b, c) => {
  const p = (q, t) => `${cx + q * Math.sin(t * Math.PI / 180)} ${cy - q * Math.cos(t * Math.PI / 180)}`, big = b - a > 180 ? 1 : 0;
  return `<path d="M${p(R, a)}A${R} ${R} 0 ${big} 1 ${p(R, b)}L${p(r, b)}A${r} ${r} 0 ${big} 0 ${p(r, a)}z" fill="${c}"/>`;
};
const trend = (pts, c) => `<g stroke="${c}"><polyline points="${pts}" fill="none"/></g>` + pts.split(' ').map(p => `<circle cx="${p.split(',')[0]}" cy="${p.split(',')[1]}" r="1.3" fill="${c}" stroke="none"/>`).join('');
const table = g => g.map((r, j) => [...r].map((c, i) => rect(.5 + i * 8, 3 + j * 6.8, 8.5 + i * 8, 9.8 + j * 6.8, { B, D, O, N, L, C, W }[c])).join('')).join('');
const box = (x, t, a, m, b, e) => line(`M${x + 1} ${t}h3.600M${x + 2.7} ${t}V${e}M${x + 1} ${e}h3.600`) + rect(x, a, x + 5.3, m, B) + rect(x, m, x + 5.3, b, O);
const combo = trend('4,13.5 12.5,6 20.5,10 28.5,1', '#1b1b1b');
const globe = circ(16.5, 16.5, 16, L);
const icons = [
  poly('22,.5 8,18 15.5,18 12,32.5 25.5,15 19,15', B),
  `<path d="M8.300 1.500L16 10h-4.700v13h-6V10H.5z" fill="${B}"/><path d="M21.800 1.500h6.300V14h4.700L25 22.500 17.200 14h4.600z" fill="${O}"/>` + rect(.5, 27, 25.5, 31.5, L) + rect(25.5, 27, 32.5, 31.5, W),
  sector(16.5, 24.5, 16, 8, -90, -60, O) + sector(16.5, 24.5, 16, 8, -60, 43, B) + sector(16.5, 24.5, 16, 8, 43, 90, B) + line('M20.500 20.500l8.500-9'),
  sector(16.5, 16.5, 16, 7.5, 0, 222, B) + sector(16.5, 16.5, 16, 7.5, 222, 318, D) + sector(16.5, 16.5, 16, 7.5, 318, 360, O),
  sector(16.5, 16.5, 16, 0, 0, 222, B) + sector(16.5, 16.5, 16, 0, 222, 318, D) + sector(16.5, 16.5, 16, 0, 318, 360, O),
  rect(1, 2, 19.6, 8.5, O) + rect(1, 8.5, 27, 15, B) + rect(1, 18, 14, 24.5, O) + rect(1, 24.5, 32.5, 31, B) + side,
  rect(1.7, 13.7, 8.5, 32.5, O) + rect(8.5, 6.4, 15, 32.5, B) + rect(18, 19.7, 24.7, 32.5, O) + rect(24.7, .5, 31.3, 32.5, B) + base,
  rows([[2, [7.8, O], [15.5, D], [19.5, B]], [10, [10.5, O], [19, D], [26.5, B]], [18, [5, O], [8, D], [14, B]], [26, [16, O], [26, D], [32.5, B]]]) + side,
  cols([[2, [13.7, B], [17, D], [25, O], [32.5]], [10, [6.5, B], [13.5, D], [22, O], [32.5]], [18, [20, B], [25, D], [28, O], [32.5]], [26, [.8, B], [7, D], [16.5, O], [32.5]]]) + base,
  rows([[2, [15, O], [22, D], [32.5, B]], [10, [18, O], [26.5, D], [32.5, B]], [18, [14, O], [22.5, D], [32.5, B]], [26, [24, O], [29, D], [32.5, B]]]) + side,
  cols([[2, [.5, B], [11, D], [18, O], [32.5]], [10, [.5, B], [7.5, D], [15, O], [32.5]], [18, [.5, B], [10, D], [19, O], [32.5]], [26, [.5, B], [4, D], [9.5, O], [32.5]]]) + base,
  rect(1.7, 18, 7, 32.5, B) + rect(10, 8, 15, 18, D) + rect(18, .5, 23, 8, C) + rect(26, .5, 31, 32.5, O) + base,
  line('M.8 0V32.500H33') + trend('3.7,14 10.7,15 17.7,8.3 24.7,10.3 31.7,3', B) + trend('3.7,29 10.7,19 17.7,23 24.7,16 31.7,13.3', D) + trend('3.7,22 10.7,26.7 17.7,14.7 24.7,22 31.7,25', O),
  poly('2,15 9,12 13,15 24,14 31,2 31,32.5 2,32.5', B) + poly('2,27 12,20 22,23 31,20 31,32.5 2,32.5', O) + poly('2,23 8,17 13,18 11,23 2,27', C) + poly('12,19 17,9 24,6 30,10 29,19 24,24 14,21', D) + poly('12,19 17,9 24,6 29,9 23,16 14,16', N) + line('M2 32.500V15M31 2v30.500') + base,
  poly('2,12 9,16 17,6 24,12 31,2 31,32.5 2,32.5', B) + poly('2,20 10,24 17,14 24,17 31,15 31,32.5 2,32.5', D) + poly('2,25 9,28 17,20 24,25 31,26 31,32.5 2,32.5', O) + base,
  rect(1.7, 20, 7, 32.5, B) + rect(10, 13, 15, 32.5, D) + rect(18, 16.5, 23, 32.5, C) + rect(26, 7, 31, 32.5, O) + base + combo,
  cols([[2, [20, B], [23, D], [28, O], [32.5]], [10, [13, B], [19, D], [25, O], [32.5]], [18, [16.5, B], [22.5, D], [27, O], [32.5]], [26, [7, B], [13, D], [20, O], [32.5]]]) + base + combo,
  box(2, 7.7, 10.5, 15, 22.5, 26.3) + box(10, 6, 9, 15, 25.5, 28.7) + box(18, 6.7, 10, 16, 19.5, 22.3) + box(26, 4.7, 8, 15, 24.5, 28),
  rect(.5, 3, 32.5, 30.3, W) + rect(8.5, 3, 16.5, 9.8, B) + rect(16.5, 3, 24.5, 9.8, B) + rect(24.5, 3, 32.5, 9.8, B) + rect(.5, 9.8, 8.5, 16.6, B) + rect(.5, 16.6, 8.5, 23.4, B) + rect(.5, 23.4, 8.5, 30.3, B) + line('M15 23h10.500v-8M17.500 20.300L14.700 23l2.800 2.700M22.800 17.800l2.700-2.800 2.700 2.800'),
  table(['BBBB', 'WWWW', 'WWWW', 'WWWW']),
  table(['DLOO', 'LCBD', 'LBCO', 'ONCD']),
  rect(.5, 3, 17, 17, N) + rect(.5, 17, 17, 30.3, D) + rect(17, 3, 32.5, 12, B) + rect(17, 12, 25, 30.3, L) + rect(25, 12, 32.5, 23, C) + rect(25, 23, 32.5, 30.3, O),
  line('M.8 0V32.500H33') + circ(12, 8.5, 3.8, O) + circ(24, 7.7, 5.8, B) + circ(8, 15.3, 1.6, O) + circ(16.5, 18, 4.3, D) + circ(27, 19, 3.7, B) + circ(6.7, 22, 2.6, D) + circ(13, 27, 2.3, B) + circ(21.7, 25.3, 1.5, O) + circ(5, 28.3, 1.3, O),
  [25, 8, .5, 3, 8, 23.5].map((t, i) => rect(1.7 + i * 4.9, t, 6.6 + i * 4.9, 32.5, B)).join('') + base,
  rect(.5, .5, 32.5, 5.5, B) + rect(3, 8, 30, 12.5, B) + rect(7, 14.5, 26, 19, B) + rect(11, 21.5, 22, 26, B) + rect(15, 28, 18.3, 32.5, B),
  line('M6 1c8 0 12 3.500 21 3.500M6 9.500c8 0 12 2 21 2.500M6 9.500c10 0 12 12 21 17.500M6 20c7 1 8 6 21 7M6 26.500c9-2 12-10 21-10M6 32.500c9-2 12-5.500 21-5.500') + rect(.5, .5, 6, 20, B) + rect(.5, 26, 6, 32.5, D) + rect(27, 4, 32.5, 12.3, O) + rect(27, 16.5, 32.5, 27, C),
  globe + line('M14 1c3 4 5 4 6 8l-5 1 3 4M22 2l-2 4 6-2M1 14c6 0 8 2 14 2M14 27l3-7 7 2-2 8-5 3M28 20l4-2M27 25l2-4') + circ(7.5, 5, 4.2, B) + circ(27.3, 8.7, 5.3, D) + circ(11, 21.5, 6.5, N),
  globe + `<path d="M5 5.500c4-5 8-4 10-4.500l-1 3 3 3-5 5-3 2-6-1z" fill="${B}"/><path d="M19 .8l8 3.200-4 3z" fill="${B}"/><path d="M12 20c4-3 8-1 11 2-1 5-6 6-6 11l-3-1z" fill="${N}"/><path d="M32 11c-7 0-7 9-1 10 1-2 2-6 1-10z" fill="${D}"/>` + line('M9 15.500l4 1 3 1.500M14 16l4 0'),
  poly('16.5,.8 30.5,8.7 30.5,24.5 16.5,32.3 2.5,24.5 2.5,8.7', W) + poly('16.5,3 27,10 27,22 16.5,28 5,23 5,10', L) + poly('16.5,6.5 25,12 27.5,23 16.5,26 8,21 8,12', B) + line('M16.500.8v31.500M2.500 8.700l28 15.800M30.500 8.700l-28 15.800M16.500 6.500l8.500 5 5.500 13'),
  `<path d="M11.500 23c0-5-6-6-5-13.500C8-3 25.500-3 26 9.500c0 7.500-5 8.500-5 13.500z" fill="${L}"/>` + rect(11.5, 23, 21, 26.5, B) + rect(12, 26.5, 20.5, 30.3, D) + rect(14.5, 30.3, 18.5, 32.5, N) + trend('2,18.5 12.5,9.5 18,15 31,4', '#1b1b1b'),
  `<path d="M7 27c-9 0-8-12 0-11.500C8 3 21 4 21.500 12c3-2 7 0 6 4.500 7 1.500 6 10.500-1 10.500z" fill="${L}"/>` + line('M9 17h5M15.500 17h4M9 20h10M21 20h3M7 23h8M17 23h9'),
  rect(.5, 3, 32.5, 30, W) + rect(.5, 3, 32.5, 7, B) + circ(16.5, 18.5, 8.5, L) + `<rect x="11.5" y="16" width="10" height="5" rx="2.5" fill="none" stroke-width="1.6"/>` + line('M14.500 18.500h4')
];
document.getElementById('visuals').innerHTML = icons.map((g, i) => `
  <div class="h-[47px] rounded border flex items-center justify-center ${i ? 'border-[#bdbdbd] bg-white' : 'border-black bg-[#e9e9e9]'}">
    <svg width="33" height="33" viewBox="0 0 33 33" stroke="#1b1b1b" stroke-width="1.1">${g}</svg>
  </div>`).join('');
</script>
</body>
</html>
